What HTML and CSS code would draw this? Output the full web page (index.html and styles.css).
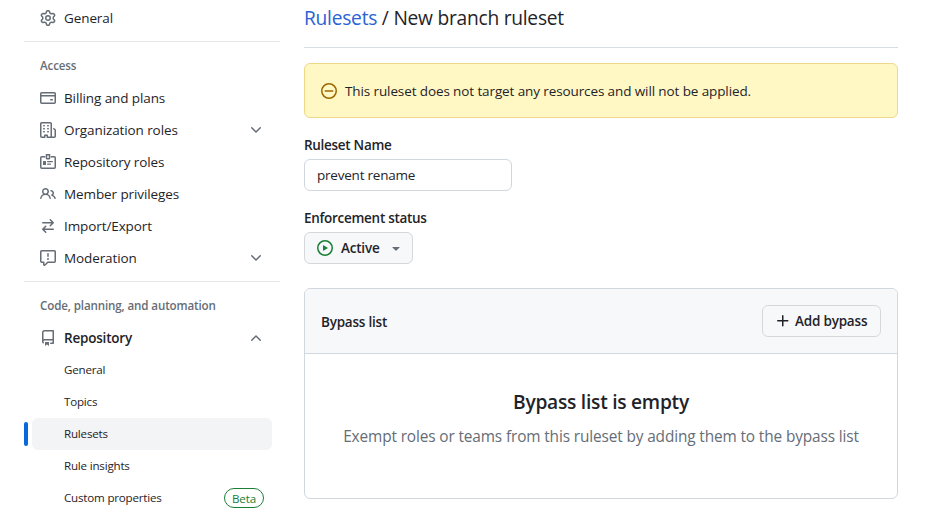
FILE: index.html
```html
<!DOCTYPE html>
<html lang="en">
<head>
<meta charset="utf-8">
<title>New branch ruleset</title>
<link rel="stylesheet" href="styles.css">
</head>
<body>
<div class="page">
  <nav class="sidebar">
    <a class="item"><svg class="icon" viewBox="0 0 16 16"><path d="M8 0a8.2 8.2 0 0 1 .701.031C9.444.095 9.99.645 10.16 1.29l.288 1.107c.018.066.079.158.212.224.231.114.454.243.668.386.123.082.233.09.299.071l1.103-.303c.644-.176 1.392.021 1.82.63.27.385.506.792.704 1.218.315.675.111 1.422-.364 1.891l-.814.806c-.049.048-.098.147-.088.294.016.257.016.515 0 .772-.01.147.038.246.088.294l.814.806c.475.469.679 1.216.364 1.891a7.977 7.977 0 0 1-.704 1.217c-.428.61-1.176.807-1.82.63l-1.102-.302c-.067-.019-.177-.011-.3.071a5.909 5.909 0 0 1-.668.386c-.133.066-.194.158-.211.224l-.29 1.106c-.168.646-.715 1.196-1.458 1.26a8.006 8.006 0 0 1-1.402 0c-.743-.064-1.289-.614-1.458-1.26l-.289-1.106c-.018-.066-.079-.158-.212-.224a5.738 5.738 0 0 1-.668-.386c-.123-.082-.233-.09-.299-.071l-1.103.303c-.644.176-1.392-.021-1.82-.63a8.12 8.12 0 0 1-.704-1.218c-.315-.675-.111-1.422.363-1.891l.815-.806c.05-.048.098-.147.088-.294a6.214 6.214 0 0 1 0-.772c.01-.147-.038-.246-.088-.294l-.815-.806C.635 6.045.431 5.298.746 4.623a7.92 7.92 0 0 1 .704-1.217c.428-.61 1.176-.807 1.82-.63l1.102.302c.067.019.177.011.3-.071.214-.143.437-.272.668-.386.133-.066.194-.158.211-.224l.29-1.106C6.009.645 6.556.095 7.299.03 7.53.01 7.764 0 8 0Zm-.571 1.525c-.036.003-.108.036-.137.146l-.289 1.105c-.147.561-.549.967-.998 1.189-.173.086-.34.183-.5.29-.417.278-.97.423-1.529.27l-1.103-.303c-.109-.03-.175.016-.195.045-.22.312-.412.644-.573.99-.014.031-.021.11.059.19l.815.806c.411.406.562.957.53 1.456a4.709 4.709 0 0 0 0 .582c.032.499-.119 1.05-.53 1.456l-.815.806c-.081.08-.073.159-.059.19.162.346.353.677.573.989.02.03.085.076.195.046l1.102-.303c.56-.153 1.113-.008 1.53.27.161.107.328.204.501.29.447.222.85.629.997 1.189l.289 1.105c.029.109.101.143.137.146a6.6 6.6 0 0 0 1.142 0c.036-.003.108-.036.137-.146l.289-1.105c.147-.561.549-.967.998-1.189.173-.086.34-.183.5-.29.417-.278.97-.423 1.529-.27l1.103.303c.109.029.175-.016.195-.045.22-.313.411-.644.573-.99.014-.031.021-.11-.059-.19l-.815-.806c-.411-.406-.562-.957-.53-1.456a4.709 4.709 0 0 0 0-.582c-.032-.499.119-1.05.53-1.456l.815-.806c.081-.08.073-.159.059-.19a6.464 6.464 0 0 0-.573-.989c-.02-.03-.085-.076-.195-.046l-1.102.303c-.56.153-1.113.008-1.53-.27a4.44 4.44 0 0 0-.501-.29c-.447-.222-.85-.629-.997-1.189l-.289-1.105c-.029-.11-.101-.143-.137-.146a6.6 6.6 0 0 0-1.142 0ZM11 8a3 3 0 1 1-6 0 3 3 0 0 1 6 0ZM9.5 8a1.5 1.5 0 1 0-3.001.001A1.5 1.5 0 0 0 9.5 8Z"/></svg><span>General</span></a>
    <hr class="divider">
    <h3 class="group">Access</h3>
    <a class="item"><svg class="icon" viewBox="0 0 16 16"><path d="M10.75 9a.75.75 0 0 0 0 1.5h1.5a.75.75 0 0 0 0-1.5h-1.5Z"/><path d="M0 3.75C0 2.784.784 2 1.75 2h12.5c.966 0 1.75.784 1.75 1.75v8.5A1.75 1.75 0 0 1 14.25 14H1.75A1.75 1.75 0 0 1 0 12.25ZM14.5 6.5h-13v5.75c0 .138.112.25.25.25h12.5a.25.25 0 0 0 .25-.25Zm0-2.75a.25.25 0 0 0-.25-.25H1.75a.25.25 0 0 0-.25.25V5h13Z"/></svg><span>Billing and plans</span></a>
    <a class="item"><svg class="icon" viewBox="0 0 16 16"><path d="M1.75 16A1.75 1.75 0 0 1 0 14.25V1.75C0 .784.784 0 1.75 0h8.5C11.216 0 12 .784 12 1.75v12.5c0 .085-.006.168-.018.25h2.268a.25.25 0 0 0 .25-.25V8.285a.25.25 0 0 0-.111-.208l-1.055-.703a.749.749 0 1 1 .832-1.248l1.055.703c.487.325.779.871.779 1.456v5.965A1.75 1.75 0 0 1 14.25 16h-3.5a.766.766 0 0 1-.197-.026c-.099.017-.2.026-.303.026h-3a.75.75 0 0 1-.75-.75V14h-1v1.25a.75.75 0 0 1-.75.75Zm-.25-1.75c0 .138.112.25.25.25H4v-1.25a.75.75 0 0 1 .75-.75h2.5a.75.75 0 0 1 .75.75v1.25h2.25a.25.25 0 0 0 .25-.25V1.75a.25.25 0 0 0-.25-.25h-8.5a.25.25 0 0 0-.25.25ZM3.75 6h.5a.75.75 0 0 1 0 1.5h-.5a.75.75 0 0 1 0-1.5ZM3 3.75A.75.75 0 0 1 3.75 3h.5a.75.75 0 0 1 0 1.5h-.5A.75.75 0 0 1 3 3.75Zm4 3A.75.75 0 0 1 7.75 6h.5a.75.75 0 0 1 0 1.5h-.5A.75.75 0 0 1 7 6.75ZM7.75 3h.5a.75.75 0 0 1 0 1.5h-.5a.75.75 0 0 1 0-1.5ZM3 9.75A.75.75 0 0 1 3.75 9h.5a.75.75 0 0 1 0 1.5h-.5A.75.75 0 0 1 3 9.75ZM7.75 9h.5a.75.75 0 0 1 0 1.5h-.5a.75.75 0 0 1 0-1.5Z"/></svg><span>Organization roles</span><svg class="icon chevron" viewBox="0 0 16 16"><path d="M12.78 5.22a.749.749 0 0 1 0 1.06l-4.25 4.25a.749.749 0 0 1-1.06 0L3.22 6.28a.749.749 0 1 1 1.06-1.06L8 8.939l3.72-3.719a.749.749 0 0 1 1.06 0Z"/></svg></a>
    <a class="item"><svg class="icon" viewBox="0 0 16 16"><path class="line" d="M5.25 2.75h-3.5a1 1 0 0 0-1 1v9.5a1 1 0 0 0 1 1h12.5a1 1 0 0 0 1-1v-9.5a1 1 0 0 0-1-1h-3.5M6.5.75h3v3.5a.5.5 0 0 1-.5.5H7a.5.5 0 0 1-.5-.5Z"/><path d="M3 7.5a.5.5 0 0 1 .5-.5h2a.5.5 0 0 1 .5.5v3a.5.5 0 0 1-.5.5h-2a.5.5 0 0 1-.5-.5ZM7.6 7h4.8a.6.6 0 0 1 0 1.2H7.6a.6.6 0 0 1 0-1.2ZM7.6 9.6h2.8a.6.6 0 0 1 0 1.2H7.6a.6.6 0 0 1 0-1.2Z"/></svg><span>Repository roles</span></a>
    <a class="item"><svg class="icon" viewBox="0 0 16 16"><path d="M2 5.5a3.5 3.5 0 1 1 5.898 2.549 5.508 5.508 0 0 1 3.034 4.084.75.75 0 1 1-1.482.235 4 4 0 0 0-7.9 0 .75.75 0 0 1-1.482-.236A5.507 5.507 0 0 1 3.102 8.05 3.493 3.493 0 0 1 2 5.5ZM11 4a3.001 3.001 0 0 1 2.22 5.018 5.01 5.01 0 0 1 2.56 3.012.749.749 0 0 1-.885.954.752.752 0 0 1-.549-.514 3.507 3.507 0 0 0-2.522-2.372.75.75 0 0 1-.574-.73v-.352a.75.75 0 0 1 .416-.672A1.5 1.5 0 0 0 11 5.5.75.75 0 0 1 11 4Zm-5.5-.5a2 2 0 1 0-.001 3.999A2 2 0 0 0 5.5 3.5Z"/></svg><span>Member privileges</span></a>
    <a class="item"><svg class="icon" viewBox="0 0 16 16"><path d="M5.22 14.78a.75.75 0 0 0 1.06-1.06L4.56 12h8.69a.75.75 0 0 0 0-1.5H4.56l1.72-1.72a.75.75 0 0 0-1.06-1.06l-3 3a.75.75 0 0 0 0 1.06l3 3Zm5.56-6.5a.75.75 0 1 1-1.06-1.06l1.72-1.72H2.75a.75.75 0 0 1 0-1.5h8.69L9.72 2.28a.75.75 0 0 1 1.06-1.06l3 3a.75.75 0 0 1 0 1.06l-3 3Z"/></svg><span>Import/Export</span></a>
    <a class="item"><svg class="icon" viewBox="0 0 16 16"><path d="M0 1.75C0 .784.784 0 1.75 0h12.5C15.216 0 16 .784 16 1.75v9.5A1.75 1.75 0 0 1 14.25 13H8.06l-2.573 2.573A1.458 1.458 0 0 1 3 14.543V13H1.75A1.75 1.75 0 0 1 0 11.25Zm1.75-.25a.25.25 0 0 0-.25.25v9.5c0 .138.112.25.25.25h2a.75.75 0 0 1 .75.75v2.19l2.72-2.72a.749.749 0 0 1 .53-.22h6.5a.25.25 0 0 0 .25-.25v-9.5a.25.25 0 0 0-.25-.25Zm7 2.25v2.5a.75.75 0 0 1-1.5 0v-2.5a.75.75 0 0 1 1.5 0ZM9 9a1 1 0 1 1-2 0 1 1 0 0 1 2 0Z"/></svg><span>Moderation</span><svg class="icon chevron" viewBox="0 0 16 16"><path d="M12.78 5.22a.749.749 0 0 1 0 1.06l-4.25 4.25a.749.749 0 0 1-1.06 0L3.22 6.28a.749.749 0 1 1 1.06-1.06L8 8.939l3.72-3.719a.749.749 0 0 1 1.06 0Z"/></svg></a>
    <hr class="divider">
    <h3 class="group">Code, planning, and automation</h3>
    <a class="item open"><svg class="icon" viewBox="0 0 16 16"><path d="M2 2.5A2.5 2.5 0 0 1 4.5 0h8.75a.75.75 0 0 1 .75.75v12.5a.75.75 0 0 1-.75.75h-2.5a.75.75 0 0 1 0-1.5h1.75v-2h-8a1 1 0 0 0-.714 1.7.75.75 0 1 1-1.072 1.05A2.495 2.495 0 0 1 2 11.5Zm10.5-1h-8a1 1 0 0 0-1 1v6.708A2.486 2.486 0 0 1 4.5 9h8ZM5 12.25a.25.25 0 0 1 .25-.25h3.5a.25.25 0 0 1 .25.25v3.25a.25.25 0 0 1-.4.2l-1.45-1.087a.249.249 0 0 0-.3 0L5.4 15.7a.25.25 0 0 1-.4-.2Z"/></svg><span>Repository</span><svg class="icon chevron up" viewBox="0 0 16 16"><path d="M12.78 5.22a.749.749 0 0 1 0 1.06l-4.25 4.25a.749.749 0 0 1-1.06 0L3.22 6.28a.749.749 0 1 1 1.06-1.06L8 8.939l3.72-3.719a.749.749 0 0 1 1.06 0Z"/></svg></a>
    <a class="item sub"><span>General</span></a>
    <a class="item sub"><span>Topics</span></a>
    <a class="item sub current"><span>Rulesets</span></a>
    <a class="item sub"><span>Rule insights</span></a>
    <a class="item sub"><span>Custom properties</span><span class="beta">Beta</span></a>
  </nav>

  <main class="main">
    <h1 class="title"><a class="link">Rulesets</a> / New branch ruleset</h1>
    <div class="flash"><svg class="icon" viewBox="0 0 16 16"><path d="M4.25 7.25a.75.75 0 0 0 0 1.5h7.5a.75.75 0 0 0 0-1.5h-7.5Z"/><path d="M16 8A8 8 0 1 1 0 8a8 8 0 0 1 16 0Zm-1.5 0a6.5 6.5 0 1 0-13 0 6.5 6.5 0 0 0 13 0Z"/></svg><span>This ruleset does not target any resources and will not be applied.</span></div>
    <div class="label">Ruleset Name</div>
    <div class="input">prevent rename</div>
    <div class="label status">Enforcement status</div>
    <div class="button select"><svg class="icon" viewBox="0 0 16 16"><path d="M8 0a8 8 0 1 1 0 16A8 8 0 0 1 8 0ZM1.5 8a6.5 6.5 0 1 0 13 0 6.5 6.5 0 0 0-13 0Zm4.879-2.773 4.264 2.559a.25.25 0 0 1 0 .428l-4.264 2.559A.25.25 0 0 1 6 10.559V5.442a.25.25 0 0 1 .379-.215Z"/></svg><span>Active</span><svg class="icon caret" viewBox="0 0 16 16"><path d="m4.427 7.427 3.396 3.396a.25.25 0 0 0 .354 0l3.396-3.396A.25.25 0 0 0 11.396 7H4.604a.25.25 0 0 0-.177.427Z"/></svg></div>
    <section class="box">
      <header class="box-header"><h2 class="box-title">Bypass list</h2><div class="button add"><svg class="icon" viewBox="0 0 16 16"><path d="M7.75 2a.75.75 0 0 1 .75.75V7h4.25a.75.75 0 0 1 0 1.5H8.5v4.25a.75.75 0 0 1-1.5 0V8.5H2.75a.75.75 0 0 1 0-1.5H7V2.75A.75.75 0 0 1 7.75 2Z"/></svg><span>Add bypass</span></div></header>
      <div class="blank"><h3 class="blank-title">Bypass list is empty</h3><p class="blank-text">Exempt roles or teams from this ruleset by adding them to the bypass list</p></div>
    </section>
  </main>
</div>
</body>
</html>
```
FILE: styles.css
```css
* { box-sizing: border-box; }
html { overflow: hidden; }
body {
  margin: 0;
  background: #fff;
  color: #1f2328;
  font: 13.5px/20px "Open Sans", "Noto Sans", sans-serif;
  letter-spacing: -0.1px;
  white-space: nowrap;
}
h1, h2, h3, p { margin: 0; }
.page { display: flex; gap: 24px; height: 516px; padding-left: 24px; overflow: hidden; }
.icon { width: 16px; height: 16px; flex: none; fill: currentColor; }

.sidebar { width: 256px; padding-top: 2px; }
.item {
  position: relative;
  display: flex;
  align-items: center;
  gap: 8px;
  height: 32px;
  margin: 0 8px;
  padding: 0 8px;
  border-radius: 6px;
}
.item .icon { color: #656d76; }
.item .line { fill: none; stroke: currentColor; stroke-width: 1.5; }
.chevron { margin-left: auto; }
.up { transform: rotate(180deg); }
.divider { height: 1px; margin: 7px 0 8px; border: 0; background: #e4e7ea; }
.group {
  height: 32px;
  padding-left: 16px;
  color: #656d76;
  font-size: 11.6px;
  font-weight: 600;
  line-height: 32px;
  letter-spacing: -0.13px;
}
.open { font-weight: 600; letter-spacing: -0.2px; }
.sub { padding-left: 32px; font-size: 11.6px; letter-spacing: -0.2px; }
.current { background: #f3f4f6; }
.current::before {
  content: "";
  position: absolute;
  left: -8px;
  top: 4px;
  width: 4px;
  height: 24px;
  border-radius: 6px;
  background: #0969da;
}
.beta {
  width: 40px;
  height: 20px;
  margin-left: auto;
  border: 1px solid #1a7f37;
  border-radius: 10px;
  color: #1a7f37;
  font-weight: 500;
  line-height: 19px;
  letter-spacing: -0.1px;
  text-align: center;
}

.main { width: 594px; }
.title {
  height: 48px;
  padding-top: 3px;
  border-bottom: 1px solid #d8dee4;
  font-size: 19.2px;
  font-weight: 400;
  line-height: 30px;
  letter-spacing: -0.25px;
}
.link { color: #2b62d3; }
.flash {
  display: flex;
  align-items: center;
  gap: 8px;
  height: 55px;
  margin-top: 15px;
  padding: 0 16px;
  border: 1px solid #eed888;
  border-radius: 6px;
  background: #fff8c5;
  letter-spacing: -0.11px;
}
.flash .icon { color: #9a6700; }
.label { margin-top: 17px; font-weight: 600; letter-spacing: -0.29px; }
.input {
  width: 208px;
  height: 32px;
  margin-top: 4px;
  padding: 0 12px;
  border: 1px solid #d0d7de;
  border-radius: 6px;
  line-height: 30px;
  letter-spacing: -0.22px;
}
.button {
  display: flex;
  align-items: center;
  height: 32px;
  padding: 0 12px;
  border: 1px solid #d5d8da;
  border-radius: 6px;
  background: #f6f8fa;
  font-weight: 600;
  letter-spacing: -0.2px;
}
.select { width: 109px; margin-top: 4px; padding-right: 8px; }
.select .icon { color: #1a7f37; margin-right: 8px; }
.select .caret { margin: 0 0 0 auto; color: #656d76; }
.add { width: 119px; gap: 4px; }
.box { height: 211px; margin-top: 24px; border: 1px solid #d0d7de; border-radius: 6px; overflow: hidden; }
.box-header {
  display: flex;
  align-items: center;
  justify-content: space-between;
  height: 65px;
  padding: 0 16px;
  border-bottom: 1px solid #d0d7de;
  background: #f6f8fa;
}
.box-title { padding-top: 2px; font-size: 13.5px; font-weight: 600; letter-spacing: -0.22px; }
.blank { padding-top: 33px; text-align: center; }
.blank-title { font-size: 19.2px; font-weight: 600; line-height: 30px; letter-spacing: -0.26px; }
.blank-text { margin-top: 8px; color: #656d76; font-size: 15.4px; line-height: 24px; letter-spacing: -0.13px; }
```
